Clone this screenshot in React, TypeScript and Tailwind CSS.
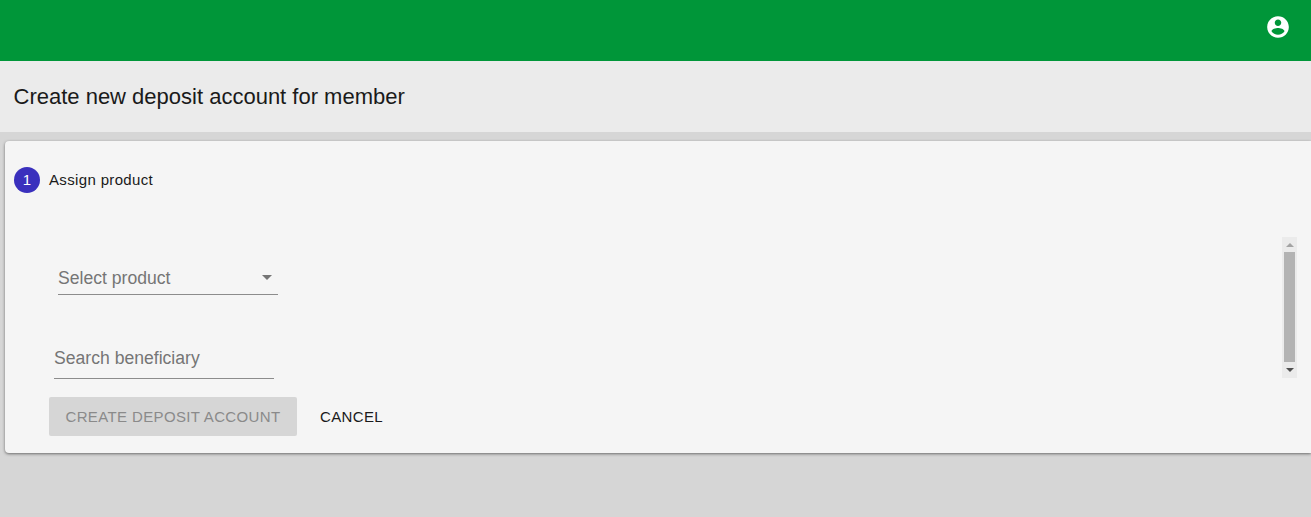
function AccountCircle() {
  return (
    <svg viewBox="0 0 24 24" className="h-[26px] w-[26px] fill-white">
      <path d="M12 2C6.48 2 2 6.48 2 12s4.48 10 10 10 10-4.48 10-10S17.52 2 12 2zm0 3c1.66 0 3 1.34 3 3s-1.34 3-3 3-3-1.34-3-3 1.34-3 3-3zm0 14.2c-2.5 0-4.71-1.28-6-3.22.03-1.99 4-3.08 6-3.08 1.99 0 5.97 1.09 6 3.08-1.29 1.94-3.5 3.22-6 3.22z" />
    </svg>
  )
}

function Scrollbar() {
  return (
    <div className="flex h-[141px] w-[15px] flex-col items-center bg-[#ebebeb]">
      <div className="flex h-[15px] w-full items-center justify-center">
        <div className="h-0 w-0 border-x-[4px] border-b-[4px] border-x-transparent border-b-[#a3a3a3]" />
      </div>
      <div className="h-[110px] w-[11px] bg-[#b3b3b3]" />
      <div className="flex h-[16px] w-full items-center justify-center">
        <div className="h-0 w-0 border-x-[4px] border-t-[4px] border-x-transparent border-t-[#505050]" />
      </div>
    </div>
  )
}

export default function App() {
  return (
    <div className="flex h-[517px] flex-col overflow-hidden bg-[#d6d6d6] font-['Liberation_Sans',sans-serif] text-[#1a1a1a]">
      {/* Top bar */}
      <div className="flex h-[61px] shrink-0 items-start justify-end bg-[#009639] pr-5 pt-[14px]">
        <AccountCircle />
      </div>

      {/* Page title */}
      <div className="flex h-[71px] shrink-0 items-center bg-[#ebebeb] pl-[13.5px]">
        <h1 className="text-[22px] font-normal leading-[30px]">Create new deposit account for member</h1>
      </div>

      {/* Card */}
      <div className="ml-[5px] mt-[9px] h-[312px] rounded-l-[4px] bg-[#f5f5f5] shadow-[0_1px_3px_rgba(0,0,0,0.5)]">
        <div className="flex items-center pl-[9px] pt-[26px]">
          <div className="flex h-[26px] w-[26px] items-center justify-center rounded-full bg-[#3a30bd] text-[15px] text-white">
            1
          </div>
          <span className="ml-[9px] text-[15px] tracking-[0.35px]">Assign product</span>
        </div>

        <div className="mt-[44px] flex justify-between pr-[14px]">
          <div className="pl-[49px]">
            <div className="ml-[4px] mt-[24px] flex h-[34px] w-[220px] items-center justify-between border-b border-[#8c8c8c] text-[17.6px] text-[#757575]">
              <span className="pt-[1px]">Select product</span>
              <svg viewBox="0 0 24 24" className="-mr-[1px] mb-[2px] h-6 w-6 fill-[#757575]">
                <path d="M7 10l5 5 5-5z" />
              </svg>
            </div>
            <div className="mt-[47px] flex h-[37px] w-[220px] items-center border-b border-[#8c8c8c] pb-[4px] text-[17.6px] text-[#757575]">
              Search beneficiary
            </div>
          </div>
          <Scrollbar />
        </div>

        <div className="mt-[18px] flex items-center pl-[44px]">
          <button className="h-[39px] w-[248px] rounded-[2px] bg-[#d6d6d6] pt-[1px] text-[15px] tracking-[0.37px] text-[#8a8a8a]">
            CREATE DEPOSIT ACCOUNT
          </button>
          <button className="ml-[23px] pt-[1px] text-[15px] tracking-[0.37px]">CANCEL</button>
        </div>
      </div>
    </div>
  )
}
